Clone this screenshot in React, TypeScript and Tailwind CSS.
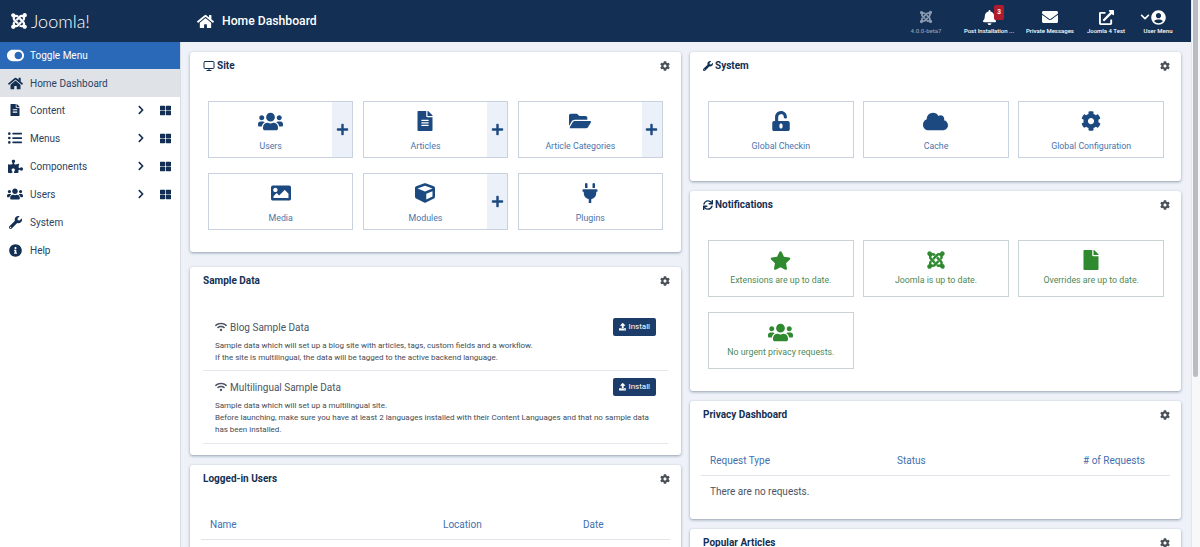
import type { ReactNode } from "react";
import {
  FaBell,
  FaChevronDown,
  FaChevronRight,
  FaCloud,
  FaCog,
  FaCube,
  FaEnvelope,
  FaExternalLinkAlt,
  FaFile,
  FaFileAlt,
  FaFolderOpen,
  FaHome,
  FaImage,
  FaInfoCircle,
  FaJoomla,
  FaListUl,
  FaPlug,
  FaPlus,
  FaPuzzlePiece,
  FaStar,
  FaSync,
  FaThLarge,
  FaToggleOn,
  FaUnlockAlt,
  FaUpload,
  FaUserCircle,
  FaUsers,
  FaWifi,
  FaWrench,
} from "react-icons/fa";
import { LuMonitor } from "react-icons/lu";

function TopItem({ icon, label, dim }: { icon: ReactNode; label: string; dim?: boolean }) {
  return (
    <div className={`flex w-[56px] flex-col items-center ${dim ? "text-[#8b9bb2]" : "text-white"}`}>
      <div className="flex h-[20px] items-center">{icon}</div>
      <div className="whitespace-nowrap text-[6px] font-medium leading-[8px]">{label}</div>
    </div>
  );
}

function Header() {
  return (
    <header className="flex h-[42px] shrink-0 items-center bg-[#132f53] text-white">
      <div className="flex w-[180px] shrink-0 items-center pl-[10px]">
        <FaJoomla className="text-[18px]" />
        <span className="ml-[3px] font-['Lato'] text-[18px] font-light leading-none">Joomla!</span>
      </div>
      <FaHome className="ml-[17px] text-[17px]" />
      <h1 className="ml-[8px] text-[12.2px] font-medium">Home Dashboard</h1>
      <div className="ml-auto flex pr-[5px]">
        <div className="mr-[7px]">
          <TopItem dim label="4.0.0-beta7" icon={<FaJoomla className="text-[14px]" />} />
        </div>
        <div className="relative mr-[5px]">
          <TopItem label="Post Installation ..." icon={<FaBell className="text-[15px]" />} />
          <span className="absolute left-[33px] top-[-2px] flex h-[15px] w-[10px] items-center justify-center rounded-[2px] bg-[#b01c2e] text-[6.5px] font-bold">
            3
          </span>
        </div>
        <TopItem label="Private Messages" icon={<FaEnvelope className="text-[16px]" />} />
        <TopItem label="Joomla 4 Test" icon={<FaExternalLinkAlt className="text-[15px]" />} />
        <div className="ml-[-4px]">
          <TopItem
            label="User Menu"
            icon={
              <div className="mr-[10px] flex items-center">
                <FaChevronDown className="text-[10px]" />
                <FaUserCircle className="ml-[1px] text-[15px]" />
              </div>
            }
          />
        </div>
      </div>
    </header>
  );
}

const navItems = [
  { label: "Content", icon: <FaFileAlt className="text-[12px]" />, more: true },
  { label: "Menus", icon: <FaListUl className="text-[14px]" />, more: true },
  { label: "Components", icon: <FaPuzzlePiece className="text-[15px]" />, more: true },
  { label: "Users", icon: <FaUsers className="text-[16px]" />, more: true },
  { label: "System", icon: <FaWrench className="text-[13px]" />, more: false },
  { label: "Help", icon: <FaInfoCircle className="text-[13px]" />, more: false },
];

function Sidebar() {
  return (
    <aside className="w-[181px] shrink-0 border-r border-[#d8dee6] bg-white text-[10px] text-[#2b4262]">
      <div className="flex h-[27px] items-center bg-[#2a69b8] text-white">
        <span className="flex w-[30px] justify-center">
          <FaToggleOn className="text-[17px]" />
        </span>
        Toggle Menu
      </div>
      <div className="flex h-[28px] items-center bg-[#dfe3e8]">
        <span className="flex w-[30px] justify-center text-[#132f53]">
          <FaHome className="text-[15px]" />
        </span>
        Home Dashboard
      </div>
      {navItems.map((item) => (
        <div key={item.label} className="flex h-[28px] items-center pb-[2px]">
          <span className="flex w-[30px] justify-center text-[#132f53]">{item.icon}</span>
          {item.label}
          {item.more && (
            <span className="ml-auto flex items-center pr-[9px] text-[#132f53]">
              <FaChevronRight className="mr-[14px] text-[10px]" />
              <FaThLarge className="text-[11px]" />
            </span>
          )}
        </div>
      ))}
    </aside>
  );
}

function Card({ title, icon, children, className }: { title: string; icon?: ReactNode; children: ReactNode; className?: string }) {
  return (
    <section className={`shrink-0 rounded-[3px] bg-white shadow-[0_1px_3px_rgba(30,50,80,0.45)] ${className ?? ""}`}>
      <div className="flex h-[26px] items-center justify-between pl-[13px] pr-[11px] pt-[1px]">
        <h2 className="flex items-center gap-[2px] text-[10px] font-bold text-[#132f53]">
          {icon}
          {title}
        </h2>
        <FaCog className="text-[10px] text-[#495057]" />
      </div>
      {children}
    </section>
  );
}

function Tile({ icon, label, add, green }: { icon: ReactNode; label: string; add?: boolean; green?: boolean }) {
  return (
    <div className={`flex h-[57px] border bg-white ${green ? "border-[#c9d2d4]" : "border-[#c8d2de]"}`}>
      <div className={`flex min-w-0 flex-1 flex-col items-center ${green ? "text-[#2f8a2f]" : "text-[#1c4a80]"}`}>
        <div className="flex h-[38px] shrink-0 items-center text-[20px]">{icon}</div>
        <div className={`text-[8.8px] leading-[12px] ${green ? "mt-[-5px] text-[#4b8a58]" : "text-[#4a74aa]"}`}>{label}</div>
      </div>
      {add && (
        <div className="flex w-[20px] items-center justify-center bg-[#ebf0f9] text-[#1c4a80]">
          <FaPlus className="text-[13px]" />
        </div>
      )}
    </div>
  );
}

function SampleRow({ title, lines, first }: { title: string; lines: string[]; first?: boolean }) {
  return (
    <div className={`border-b border-[#e4e7eb] px-[12px] ${first ? "pb-[6px] pt-[8px]" : "pb-[7px] pt-[7px]"}`}>
      <div className="flex h-[18px] items-center justify-between">
        <div className="flex items-center gap-[3px] text-[10px] text-[#4b5563]">
          <FaWifi className="text-[12px] text-[#4b5563]" />
          {title}
        </div>
        <button className="flex h-[18px] w-[43px] items-center justify-center gap-[2px] rounded-[2px] bg-[#1c3d6a] text-[8px] text-white">
          <FaUpload className="text-[7.5px]" />
          Install
        </button>
      </div>
      <div className="mt-[4px] text-[8px] leading-[12px] text-[#444c56]">
        {lines.map((line) => (
          <p key={line}>{line}</p>
        ))}
      </div>
    </div>
  );
}

function TableHead({ cols }: { cols: { label: string; width: string }[] }) {
  return (
    <div className="mx-[11px] flex h-[23px] items-start border-b border-[#e0e4e9] pl-[9px] text-[10px] text-[#3f6fae]">
      {cols.map((c) => (
        <span key={c.label} className={c.width}>
          {c.label}
        </span>
      ))}
    </div>
  );
}

function App() {
  return (
    <div className="flex h-[547px] w-[1200px] overflow-hidden bg-[#eef2f8] font-['Roboto',sans-serif]">
      <div className="flex min-w-0 flex-1 flex-col">
        <Header />
        <div className="flex min-h-0 flex-1">
          <Sidebar />
          <main className="flex min-w-0 flex-1 gap-[9px] overflow-hidden pl-[9px] pr-[10px] pt-[10px]">
            <div className="flex w-[491px] flex-col">
              <Card title="Site" icon={<LuMonitor className="text-[12px] text-[#132f53]" />} className="mb-[15px] h-[200px]">
                <div className="grid grid-cols-3 gap-x-[9.5px] gap-y-[15px] px-[18px] pt-[23px]">
                  <Tile add icon={<FaUsers className="text-[25px]" />} label="Users" />
                  <Tile add icon={<FaFileAlt />} label="Articles" />
                  <Tile add icon={<FaFolderOpen className="text-[22px]" />} label="Article Categories" />
                  <Tile icon={<FaImage />} label="Media" />
                  <Tile add icon={<FaCube />} label="Modules" />
                  <Tile icon={<FaPlug />} label="Plugins" />
                </div>
              </Card>
              <Card title="Sample Data" className="mb-[10px] h-[188px]">
                <div className="px-[13px] pt-[17px]">
                  <SampleRow
                    first
                    title="Blog Sample Data"
                    lines={[
                      "Sample data which will set up a blog site with articles, tags, custom fields and a workflow.",
                      "If the site is multilingual, the data will be tagged to the active backend language.",
                    ]}
                  />
                  <SampleRow
                    title="Multilingual Sample Data"
                    lines={[
                      "Sample data which will set up a multilingual site.",
                      "Before launching, make sure you have at least 2 languages installed with their Content Languages and that no sample data",
                      "has been installed.",
                    ]}
                  />
                </div>
              </Card>
              <Card title="Logged-in Users" className="h-[120px]">
                <div className="pt-[26px]">
                  <TableHead
                    cols={[
                      { label: "Name", width: "w-[233px]" },
                      { label: "Location", width: "w-[140px]" },
                      { label: "Date", width: "" },
                    ]}
                  />
                </div>
              </Card>
            </div>
            <div className="flex w-[491px] flex-col">
              <Card title="System" icon={<FaWrench className="text-[10px] text-[#132f53]" />} className="mb-[10px] h-[129px]">
                <div className="grid grid-cols-3 gap-x-[9.5px] pl-[18px] pr-[17px] pt-[23px]">
                  <Tile icon={<FaUnlockAlt />} label="Global Checkin" />
                  <Tile icon={<FaCloud className="text-[25px]" />} label="Cache" />
                  <Tile icon={<FaCog />} label="Global Configuration" />
                </div>
              </Card>
              <Card title="Notifications" icon={<FaSync className="text-[10px] text-[#132f53]" />} className="mb-[10px] h-[200px]">
                <div className="grid grid-cols-3 gap-x-[9.5px] gap-y-[15px] pl-[18px] pr-[17px] pt-[23px]">
                  <Tile green icon={<FaStar className="text-[21px]" />} label="Extensions are up to date." />
                  <Tile green icon={<FaJoomla />} label="Joomla is up to date." />
                  <Tile green icon={<FaFile />} label="Overrides are up to date." />
                  <Tile green icon={<FaUsers className="text-[25px]" />} label="No urgent privacy requests." />
                </div>
              </Card>
              <Card title="Privacy Dashboard" className="mb-[10px] h-[118px]">
                <div className="pt-[26px]">
                  <TableHead
                    cols={[
                      { label: "Request Type", width: "w-[187px]" },
                      { label: "Status", width: "w-[186px]" },
                      { label: "# of Requests", width: "" },
                    ]}
                  />
                  <p className="pl-[20px] pt-[8px] text-[10px] text-[#4b5563]">There are no requests.</p>
                </div>
              </Card>
              <Card title="Popular Articles" className="h-[100px]">
                <div />
              </Card>
            </div>
          </main>
        </div>
      </div>
      <div className="w-[9px] shrink-0 border-l border-[#e3e6ea] bg-[#f7f8fa] pl-[1px] pr-[2px]">
        <div className="h-[377px] rounded-b-full bg-[#b9bcc1]" />
      </div>
    </div>
  );
}

export default App;
